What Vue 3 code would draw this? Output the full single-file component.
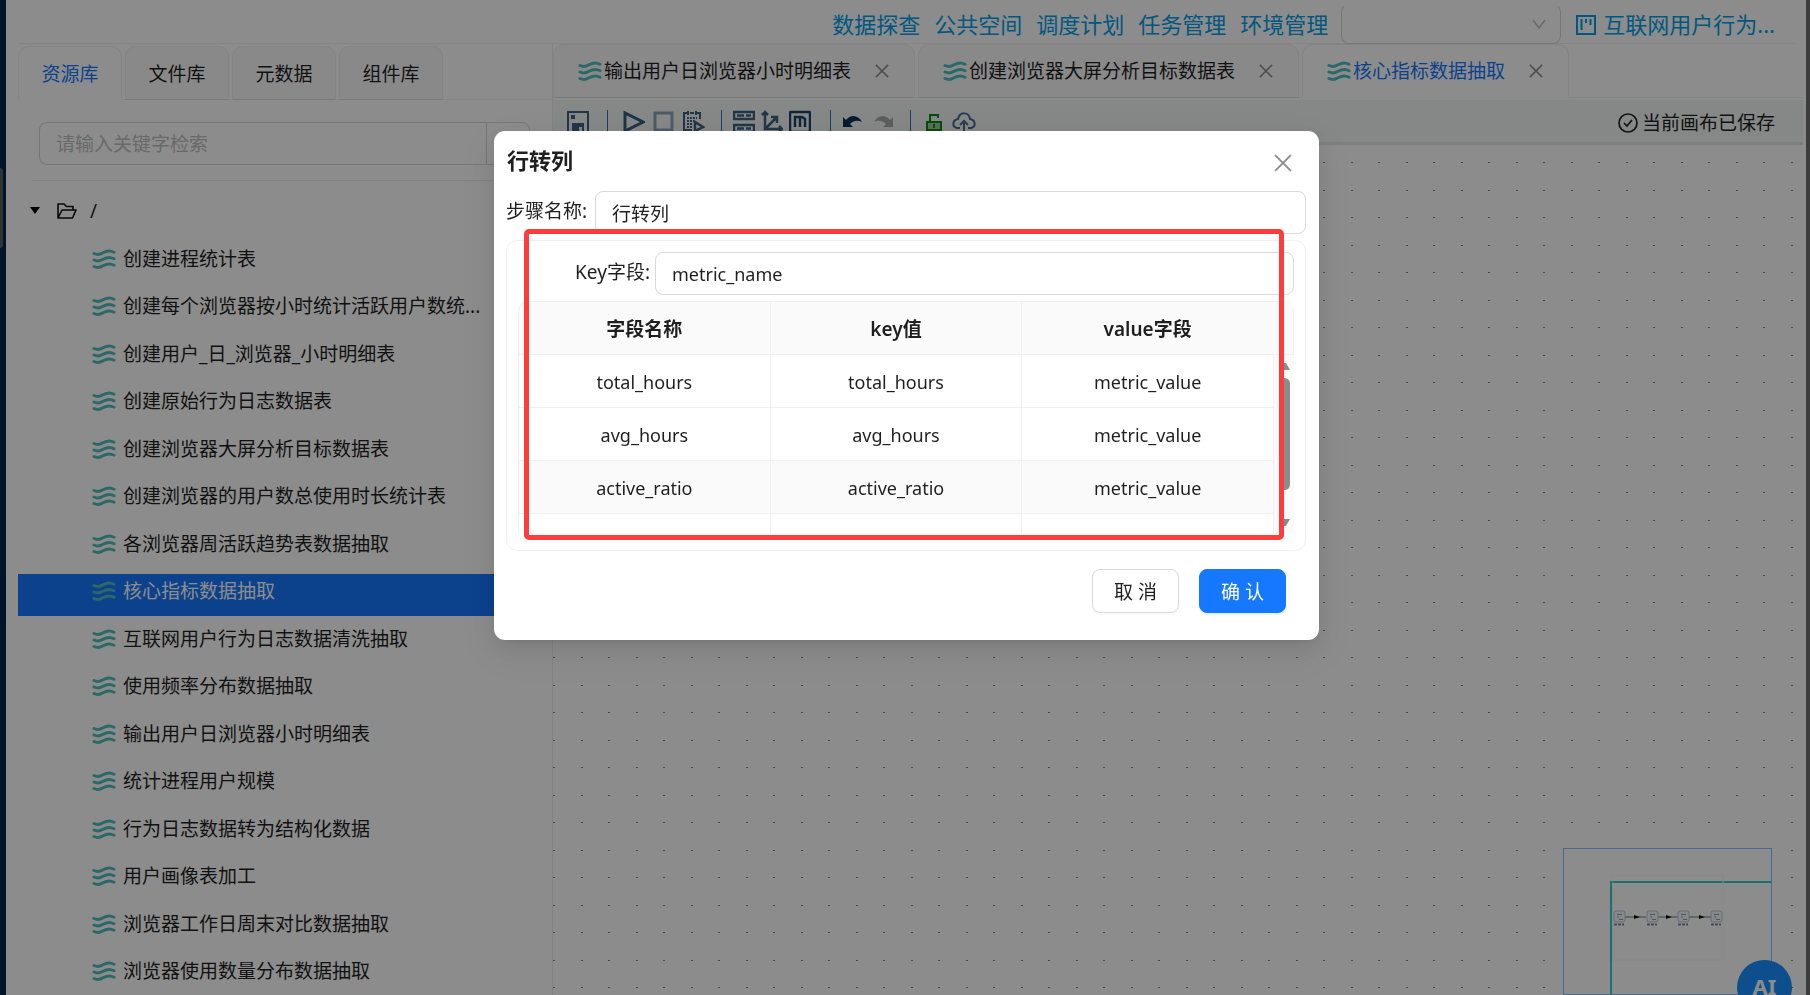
<script setup>
import { ref } from 'vue'

const links = ['数据探查', '公共空间', '调度计划', '任务管理', '环境管理']

const sideTabs = ['资源库', '文件库', '元数据', '组件库']
const sideTab = ref('资源库')

const resources = [
  '创建进程统计表',
  '创建每个浏览器按小时统计活跃用户数统...',
  '创建用户_日_浏览器_小时明细表',
  '创建原始行为日志数据表',
  '创建浏览器大屏分析目标数据表',
  '创建浏览器的用户数总使用时长统计表',
  '各浏览器周活跃趋势表数据抽取',
  '核心指标数据抽取',
  '互联网用户行为日志数据清洗抽取',
  '使用频率分布数据抽取',
  '输出用户日浏览器小时明细表',
  '统计进程用户规模',
  '行为日志数据转为结构化数据',
  '用户画像表加工',
  '浏览器工作日周末对比数据抽取',
  '浏览器使用数量分布数据抽取'
]
const current = ref('核心指标数据抽取')

const flowTabs = ref(['输出用户日浏览器小时明细表', '创建浏览器大屏分析目标数据表', '核心指标数据抽取'])
const closeTab = name => {
  flowTabs.value = flowTabs.value.filter(t => t !== name)
}

const visible = ref(true)
const stepName = ref('行转列')
const keyField = ref('metric_name')
const columns = ['字段名称', 'key值', 'value字段']
const rows = ref([
  ['total_hours', 'total_hours', 'metric_value'],
  ['avg_hours', 'avg_hours', 'metric_value'],
  ['active_ratio', 'active_ratio', 'metric_value'],
  ['', '', '']
])
const hovered = ref(2)

const nodes = [7, 40, 71, 104]
</script>

<template>
  <div class="page">
    <svg class="defs" width="0" height="0" aria-hidden="true">
      <symbol id="wave" viewBox="0 0 24 20">
        <g fill="none" stroke="#4fc0c0" stroke-width="3" stroke-linecap="round">
          <path d="M2 4.500c3 1.500 6 1.200 9-.800 4-2.200 8-2.200 11-.500" />
          <path d="M2 11c3 1.500 6 1.200 9-.800 4-2.200 8-2.200 11-.500" />
          <path d="M2 17.500c3 1.500 6 1.200 9-.800 4-2.200 8-2.200 11-.500" />
        </g>
      </symbol>
      <symbol id="cross" viewBox="0 0 16 16">
        <path d="M1 1l14 14M15 1L1 15" fill="none" stroke="currentColor" stroke-width="1.700" />
      </symbol>
    </svg>

    <div class="rail"><span class="rail-thumb"></span></div>

    <div class="main">
      <header class="header">
        <nav class="links">
          <a v-for="link in links" :key="link" href="#">{{ link }}</a>
        </nav>
        <div class="project-select">
          <select aria-label="项目"></select>
          <svg width="14" height="10" viewBox="0 0 14 10"><path d="M1 1l6 8 6-8" fill="none" stroke="#bfbfbf" stroke-width="1.500" /></svg>
        </div>
        <a class="project" href="#">
          <svg width="20" height="22" viewBox="0 0 20 22" fill="none" stroke="currentColor">
            <rect x="1" y="3" width="18" height="18" stroke-width="2" />
            <path d="M5.500 6v11M10 6v4M14.500 6v6" stroke-width="2" />
          </svg>
          <span>互联网用户行为...</span>
        </a>
      </header>

      <div class="body">
        <aside class="sidebar">
          <div class="side-tabs">
            <button
              v-for="tab in sideTabs"
              :key="tab"
              type="button"
              :class="['tab', { active: tab === sideTab }]"
              @click="sideTab = tab"
            >{{ tab }}</button>
          </div>
          <div class="search">
            <input type="text" placeholder="请输入关键字检索" aria-label="请输入关键字检索" />
            <button type="button" aria-label="检索"></button>
          </div>
          <hr />
          <ul class="tree">
            <li>
              <button type="button" class="node root">
                <svg width="10" height="7" viewBox="0 0 10 7"><path d="M0 0h10L5 7z" fill="#000" /></svg>
                <svg class="folder" width="20" height="16" viewBox="0 0 20 16">
                  <path d="M1 15V1h6l2.500 2.500H16V7M1 15h14.500L19 7H5z" fill="none" stroke="#111" stroke-width="1.600" stroke-linejoin="round" />
                </svg>
                <span>/</span>
              </button>
            </li>
            <li v-for="item in resources" :key="item">
              <button type="button" :class="['node', { selected: item === current }]" @click="current = item">
                <svg width="24" height="20"><use href="#wave" /></svg>
                <span>{{ item }}</span>
              </button>
            </li>
          </ul>
        </aside>

        <section class="workspace">
          <div class="flow-tabs">
            <div v-for="tab in flowTabs" :key="tab" :class="['flow-tab', { active: tab === current }]">
              <svg width="24" height="20"><use href="#wave" /></svg>
              <button type="button" class="flow-name" @click="current = tab">{{ tab }}</button>
              <button type="button" class="flow-close" aria-label="关闭" @click="closeTab(tab)">
                <svg width="14" height="14"><use href="#cross" /></svg>
              </button>
            </div>
          </div>

          <div class="toolbar">
            <div class="tools">
              <button type="button" class="save" aria-label="保存">
                <svg width="22" height="24" viewBox="0 0 22 24" fill="none" stroke="#3f6385">
                  <path d="M1 2h20v21H1z" stroke-width="2" />
                  <path d="M5 13h12v10H5z" fill="#3f6385" stroke="none" />
                  <path d="M12 17h3v6h-3z" fill="#e6eeee" stroke="none" />
                  <path d="M4 5h4v4H4z" fill="#3f6385" stroke="none" />
                </svg>
              </button>
              <i class="sep"></i>
              <div class="group">
                <button type="button" aria-label="运行">
                  <svg width="22" height="24" viewBox="0 0 22 24"><path d="M2 3v18l18-9z" fill="none" stroke="#3a5f82" stroke-width="3" /></svg>
                </button>
                <button type="button" aria-label="停止">
                  <svg width="22" height="24" viewBox="0 0 22 24"><path d="M2 3h17v17H2z" fill="none" stroke="#8da4bb" stroke-width="3" /></svg>
                </button>
                <button type="button" aria-label="调度">
                  <svg width="22" height="24" viewBox="0 0 22 24" fill="none" stroke="#3f6385" stroke-width="2">
                    <path d="M17 9V3h-3M11 3H7M4 3H1v17h8M5 1v4M13 1v4" />
                    <path d="M4 8h10M4 11h7M4 14h6M4 17h5" stroke-dasharray="2 1" />
                    <path d="M12 12v9l8-4z" stroke-width="2.500" />
                  </svg>
                </button>
              </div>
              <i class="sep"></i>
              <div class="group tight">
                <button type="button" aria-label="资源">
                  <svg width="22" height="24" viewBox="0 0 22 24" fill="none" stroke="#3f6385" stroke-width="2.500">
                    <path d="M1 2h20v7H1zM1 15h20v7H1zM4 5.500h7M13 5.500h5M4 18.500h7M13 18.500h5" />
                  </svg>
                </button>
                <button type="button" aria-label="坐标">
                  <svg width="22" height="24" viewBox="0 0 22 24" fill="none" stroke="#3f6385" stroke-width="2.500">
                    <path d="M4 2v17h17M5 18L16 7M1 5l3-3 3 3M18 16l3 3-3 3M10 7h6v6" />
                  </svg>
                </button>
                <button type="button" aria-label="模型">
                  <svg width="22" height="24" viewBox="0 0 22 24" fill="none" stroke="#1d446b">
                    <rect x="1" y="2" width="20" height="20" rx="1" stroke-width="2.500" />
                    <path d="M6 17V7h7l3 2v8M11 7v10" stroke-width="2.500" />
                  </svg>
                </button>
              </div>
              <i class="sep"></i>
              <div class="group undo">
                <button type="button" aria-label="撤销">
                  <svg width="22" height="14" viewBox="0 0 22 14"><path d="M1 2v10h10L8 9c4-4 8-4 12-2C16 0 9-1 4 5z" fill="#0b3255" /></svg>
                </button>
                <button type="button" aria-label="重做">
                  <svg width="22" height="14" viewBox="0 0 22 14"><path d="M21 2v10H11l3-3c-4-4-8-4-12-2C6 0 13-1 18 5z" fill="#aaa" /></svg>
                </button>
              </div>
              <i class="sep"></i>
              <div class="group lock">
                <button type="button" aria-label="解锁">
                  <svg width="16" height="20" viewBox="0 0 16 20" fill="none" stroke="#0c8a10" stroke-width="2">
                    <path d="M1 10h14v8H1z" fill="#a4cba4" />
                    <path d="M4 10V3h8v3M8 12v4" />
                  </svg>
                </button>
                <button type="button" aria-label="上传">
                  <svg width="24" height="20" viewBox="0 0 24 20" fill="none" stroke="#4a6d8f" stroke-width="2">
                    <path d="M8 16H5c-5-1-5-8 1-9 2-8 11-7 12 0 6 1 6 8 1 9h-3M12 20V10M8 13l4-4 4 4" />
                  </svg>
                </button>
              </div>
            </div>
            <div class="saved">
              <svg width="20" height="20" viewBox="0 0 20 20" fill="none" stroke="#222" stroke-width="1.700">
                <circle cx="10" cy="10" r="9" />
                <path d="M6 10l3 3 5-6" />
              </svg>
              <span>当前画布已保存</span>
            </div>
          </div>

          <div class="canvas">
            <svg class="dots" width="100%" height="100%" aria-hidden="true">
              <pattern id="grid" width="55" height="55" patternUnits="userSpaceOnUse">
                <path d="M0 17h2v1h-2zM28 17h2v1h-2zM0 45h2v1h-2zM28 45h2v1h-2z" fill="#888" />
              </pattern>
              <rect width="100%" height="100%" fill="url(#grid)" />
            </svg>
            <div class="minimap">
              <div class="viewport"></div>
              <svg class="graph" width="112" height="86" viewBox="0 0 112 86">
                <rect x="0" y="0" width="111" height="85" fill="none" stroke="#f6f6f6" />
                <path d="M12 42h22M46 42h20M77 42h22" stroke="#777" />
                <path d="M22 40l6 2-6 2zM54 40l6 2-6 2zM87 40l6 2-6 2z" fill="#111" />
                <g v-for="x in nodes" :key="x">
                  <rect :x="x - 5" y="36" width="11" height="11" rx="2" fill="#f4f7ff" stroke="#b9c6e6" />
                  <path :d="`M${x - 2} 39.500h5M${x - 2} 42h2M${x} 44.500h4`" stroke="#7fa0a8" />
                  <path :d="`M${x - 5} 49.500h10`" stroke="#8a8490" stroke-width="2" stroke-dasharray="3 1" />
                </g>
              </svg>
            </div>
          </div>
        </section>
      </div>
    </div>

    <div class="rail-right"></div>
    <button type="button" class="ai">AI</button>

    <div v-if="visible" class="mask">
      <div class="modal" role="dialog" aria-labelledby="modal-title">
        <div class="modal-head">
          <h2 id="modal-title">行转列</h2>
          <button type="button" class="modal-close" aria-label="关闭" @click="visible = false">
            <svg width="18" height="18"><use href="#cross" /></svg>
          </button>
        </div>
        <div class="field">
          <label for="step-name">步骤名称:</label>
          <input id="step-name" v-model="stepName" type="text" />
        </div>
        <div class="panel">
          <div class="field key">
            <label for="key-field">Key字段:</label>
            <input id="key-field" v-model="keyField" type="text" />
          </div>
          <div class="table-box">
            <table>
              <thead>
                <tr>
                  <th v-for="col in columns" :key="col">{{ col }}</th>
                </tr>
              </thead>
              <tbody>
                <tr v-for="(row, i) in rows" :key="i" :class="{ hovered: i === hovered }" @mouseenter="hovered = i">
                  <td v-for="(cell, j) in row" :key="j">{{ cell }}</td>
                </tr>
              </tbody>
            </table>
            <div class="scroll">
              <div class="scroll-head"></div>
              <div class="scroll-track">
                <svg width="11" height="7" viewBox="0 0 11 7"><path d="M4 0h3l4 7H0z" fill="#8b8b8b" /></svg>
                <div class="scroll-thumb"></div>
                <svg width="11" height="7" viewBox="0 0 11 7"><path d="M0 0h11L7 7H4z" fill="#8b8b8b" /></svg>
              </div>
            </div>
          </div>
        </div>
        <div class="modal-foot">
          <button type="button" class="btn" @click="visible = false">取 消</button>
          <button type="button" class="btn primary" @click="visible = false">确 认</button>
        </div>
        <div class="highlight"></div>
      </div>
    </div>
  </div>
</template>

<style>
body {
  margin: 0;
  overflow: hidden;
}
</style>

<style scoped>
* {
  box-sizing: border-box;
}
.page {
  display: flex;
  position: relative;
  height: 100vh;
  overflow: hidden;
  background: #fff;
  color: #1f1f1f;
  font-family: "Noto Sans", "Noto Sans CJK SC", sans-serif;
  font-size: 19px;
  line-height: 28px;
}
.defs {
  position: absolute;
}
button,
input,
select {
  font: inherit;
  color: inherit;
}
button {
  padding: 0;
  border: none;
  background: none;
  cursor: pointer;
}
a {
  color: #009fe8;
  text-decoration: none;
}
svg {
  display: block;
  flex: none;
}

.rail {
  width: 6px;
  padding-top: 168px;
  background: #00264d;
}
.rail-thumb {
  display: block;
  width: 3px;
  height: 80px;
  border-radius: 0 3px 3px 0;
  background: #5c5c5c;
}
.rail-right {
  width: 4px;
  background: #6e6e6e;
}
.main {
  display: flex;
  flex-direction: column;
  flex: 1;
  min-width: 0;
  padding: 0 3px 0 12px;
}

.header {
  display: flex;
  align-items: center;
  justify-content: flex-end;
  height: 44px;
  margin-right: 8px;
  padding: 4px 20px 0 0;
  border-bottom: 1px solid #f0f0f0;
  font-size: 22px;
}
.links {
  display: flex;
  gap: 14px;
}
.project-select {
  display: flex;
  align-items: center;
  position: relative;
  width: 220px;
  margin: 0 15px 0 13px;
}
.project-select select {
  width: 100%;
  height: 40px;
  border: 1px solid #d9d9d9;
  border-top-color: transparent;
  border-radius: 8px;
  background: none;
  appearance: none;
}
.project-select svg {
  position: absolute;
  right: 15px;
}
.project {
  display: flex;
  align-items: center;
  gap: 7px;
}

.body {
  display: flex;
  flex: 1;
  min-height: 0;
}
.sidebar {
  width: 535px;
  padding-top: 2px;
  border-right: 1px solid #ececec;
  overflow: hidden;
}
.side-tabs {
  display: flex;
  gap: 3px;
  height: 54px;
  box-shadow: inset 0 -1px #f0f0f0;
}
.tab {
  width: 104px;
  padding-top: 2px;
  border: 1px solid #f0f0f0;
  border-bottom-color: #dcdcdc;
  border-radius: 11px 11px 0 0;
  background: #fafafa;
}
.tab.active {
  border-bottom-color: #fff;
  background: #fff;
  color: #1677ff;
}
.search {
  display: flex;
  height: 43px;
  margin: 22px 22px 0 21px;
}
.search input {
  flex: 1;
  min-width: 0;
  padding: 0 16px;
  border: 1px solid #d9d9d9;
  border-right: none;
  border-radius: 8px 0 0 8px;
  outline: none;
}
.search input::placeholder {
  color: #bfbfbf;
}
.search button {
  width: 44px;
  border: 1px solid #d9d9d9;
  border-radius: 0 8px 8px 0;
}
hr {
  margin: 15px 22px 0 14px;
  border: none;
  border-top: 1px solid #ececec;
}
.tree {
  margin: 13px 0 0;
  padding: 0;
  list-style: none;
}
.tree li {
  margin-bottom: 5px;
}
.tree li:nth-child(odd) {
  margin-bottom: 6px;
}
.node {
  display: flex;
  align-items: center;
  gap: 7px;
  width: 100%;
  height: 42px;
  padding: 0 0 9px 74px;
  text-align: left;
  white-space: nowrap;
}
.node.root {
  gap: 17px;
  padding-left: 12px;
}
.folder {
  margin-right: -4px;
}
.node.selected {
  background: #1677ff;
  color: #fff;
}

.workspace {
  display: flex;
  flex-direction: column;
  flex: 1;
  min-width: 0;
}
.flow-tabs {
  display: flex;
  gap: 3px;
  height: 54px;
  box-shadow: inset 0 -1px #f0f0f0;
}
.flow-tab {
  display: flex;
  align-items: center;
  gap: 2px;
  padding: 0 25px 0 24px;
  border: 1px solid #f0f0f0;
  border-bottom-color: #dcdcdc;
  border-radius: 11px 11px 0 0;
  background: #fafafa;
}
.flow-tab.active {
  border-bottom-color: #fff;
  background: #fff;
  color: #1677ff;
}
.flow-close {
  margin-left: 22px;
  color: #8c8c8c;
}
.toolbar {
  display: flex;
  align-items: flex-start;
  justify-content: space-between;
  height: 45px;
  margin-top: 2px;
  padding: 10px 28px 0 14px;
  border-bottom: 3px solid #e4e8e7;
  background: #f3f8f6;
}
.tools,
.group {
  display: flex;
}
.tools {
  gap: 15px;
}
.group {
  gap: 8px;
}
.group.tight {
  gap: 6px;
  margin: 0 3px 0 -4px;
}
.group.undo {
  margin-left: -4px;
}
.group.lock {
  gap: 10px;
}
.tools button {
  height: 24px;
}
.tools .save {
  margin-right: 2px;
}
.sep {
  width: 1px;
  height: 26px;
  margin-left: 1px;
  background: #1677d2;
}
.saved {
  display: flex;
  align-items: center;
  gap: 4px;
  line-height: 26px;
}

.canvas {
  position: relative;
  flex: 1;
  min-height: 0;
}
.dots {
  position: absolute;
}
.minimap {
  position: absolute;
  right: 31px;
  bottom: 0;
  width: 209px;
  height: 147px;
  border: 1px solid #84bdff;
  background: #fff;
  overflow: hidden;
}
.viewport {
  position: absolute;
  inset: 32px -2px -2px 46px;
  border: 2px solid #31d0c6;
}
.graph {
  position: absolute;
  left: 48px;
  top: 26px;
}
.ai {
  position: absolute;
  right: 18px;
  bottom: -20px;
  width: 55px;
  height: 55px;
  padding-bottom: 4px;
  border-radius: 50%;
  background: #1890ff;
  color: #fff;
  font-size: 22px;
  font-weight: 700;
}

.mask {
  display: flex;
  align-items: flex-start;
  justify-content: center;
  position: fixed;
  inset: 0;
  padding: 131px 0 0 3px;
  background: rgba(0, 0, 0, 0.45);
}
.modal {
  position: relative;
  width: 825px;
  padding: 0 13px 27px 12px;
  border-radius: 11px;
  background: #fff;
  box-shadow: 0 8px 22px rgba(0, 0, 0, 0.08), 0 4px 8px -5px rgba(0, 0, 0, 0.12), 0 12px 38px 11px rgba(0, 0, 0, 0.05);
}
.modal-head {
  display: flex;
  align-items: flex-start;
  justify-content: space-between;
  height: 60px;
  padding: 0 14px 0 1px;
}
h2 {
  margin: 0;
  font-size: 22px;
  font-weight: 700;
  line-height: 58px;
}
.modal-close {
  height: 64px;
  color: #8c8c8c;
}
.field {
  display: flex;
}
.field label {
  width: 89px;
  line-height: 40px;
}
.field input {
  flex: 1;
  min-width: 0;
  height: 43px;
  padding: 0 16px;
  border: 1px solid #d9d9d9;
  border-radius: 8px;
  background: #fff;
  outline: none;
}
.field.key label {
  width: 137px;
  padding-right: 5px;
  text-align: right;
}
.field.key input {
  font-size: 18px;
}
.panel {
  margin-top: 6px;
  padding: 11px 11px 16px;
  border: 1px solid #f0f0f0;
  border-radius: 11px;
}
.table-box {
  display: flex;
  height: 233px;
  margin-top: 6px;
  border-top: 1px solid #f0f0f0;
  border-left: 1px solid #f0f0f0;
  border-radius: 11px 11px 0 0;
  overflow: hidden;
}
table {
  flex: 1;
  width: 100%;
  height: 265px;
  border-collapse: separate;
  border-spacing: 0;
  table-layout: fixed;
}
th,
td {
  height: 53px;
  padding: 2px 0 0;
  border-right: 1px solid #f0f0f0;
  border-bottom: 1px solid #f0f0f0;
  text-align: center;
}
th {
  background: #fafafa;
  font-weight: 600;
}
td {
  font-size: 18px;
}
th:last-child {
  border-right-color: #fafafa;
}
.hovered td {
  background: #fafafa;
}
.scroll {
  display: flex;
  flex: none;
  flex-direction: column;
  width: 20px;
}
.scroll-head {
  height: 53px;
  border-right: 1px solid #f0f0f0;
  border-bottom: 1px solid #f0f0f0;
  background: #fafafa;
}
.scroll-track {
  display: flex;
  flex-direction: column;
  align-items: center;
  flex: 1;
  padding: 8px 0;
  background: #fafafa;
}
.scroll-thumb {
  width: 11px;
  height: 112px;
  margin: 8px 0 29px;
  border-radius: 6px;
  background: #8b8b8b;
}
.modal-foot {
  display: flex;
  justify-content: flex-end;
  gap: 20px;
  margin-top: 18px;
  padding-right: 20px;
}
.btn {
  height: 44px;
  padding: 1px 21px 0;
  border: 1px solid #d9d9d9;
  border-radius: 8px;
  background: #fff;
  box-shadow: 0 2px 0 rgba(0, 0, 0, 0.02);
}
.btn.primary {
  border-color: #1677ff;
  background: #1677ff;
  color: #fff;
  box-shadow: 0 2px 0 rgba(5, 145, 255, 0.1);
}
.highlight {
  position: absolute;
  inset: 98px 35px 100px 30px;
  border: 5px solid #ff3b3b;
  border-radius: 5px;
  pointer-events: none;
}
</style>
